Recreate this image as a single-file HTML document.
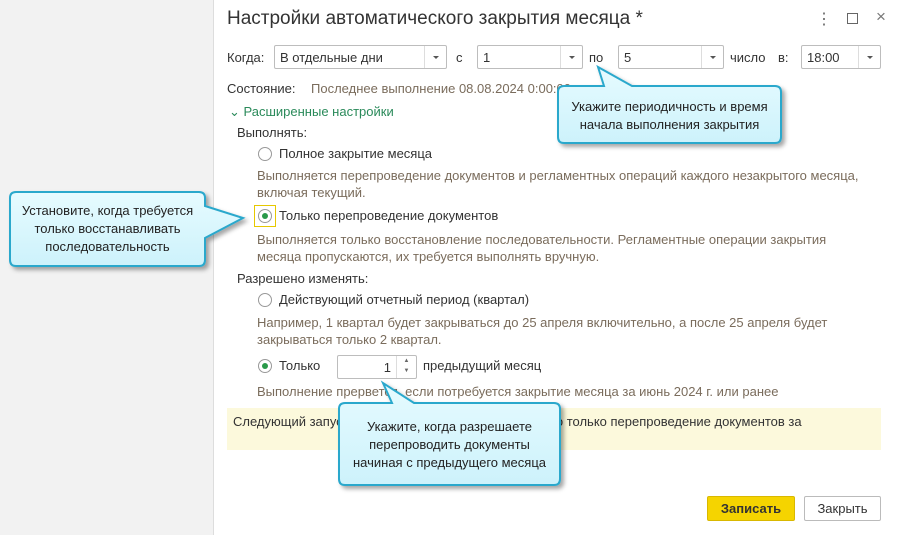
<!DOCTYPE html>
<html><head><meta charset="utf-8"><style>
*{margin:0;padding:0;box-sizing:border-box}
body{width:900px;height:535px;position:relative;overflow:hidden;background:#fff;font-family:"Liberation Sans",sans-serif;font-size:13px;color:#333}
.a{position:absolute;white-space:nowrap}
.left{position:absolute;left:0;top:0;width:214px;height:535px;background:#f2f2f2;border-right:1px solid #ddd}
.inp{position:absolute;height:24px;border:1px solid #bdbdbd;border-radius:2px;background:#fff;padding:4px 5px;font-size:13px}
.dd{position:absolute;right:0;top:0;width:22px;height:22px;border-left:1px solid #ddd}
.dd:after{content:"";position:absolute;left:8px;top:10px;border-left:3px solid transparent;border-right:3px solid transparent;border-top:3px solid #555}
.desc{color:#7a6c5c}
.rad{position:absolute;width:14px;height:14px;border:1px solid #999;border-radius:50%;background:#fff}
.rad.on:after{content:"";position:absolute;left:3px;top:3px;width:6px;height:6px;border-radius:50%;background:#2a9a4a}
.ct{position:absolute;text-align:center;font-size:13px;line-height:18px;color:#222}
</style></head><body>
<div class="left"></div>
<div class="a" style="left:227px;top:8px;font-size:19px;color:#333">Настройки автоматического закрытия месяца *</div>
<div class="a" style="left:816px;top:9px;font-size:16px;color:#666">⋮</div>
<div class="a" style="left:847px;top:13px;width:11px;height:11px;border:1px solid #666"></div>
<div class="a" style="left:876px;top:7px;font-size:17px;color:#777">×</div>

<div class="a" style="left:227px;top:50px">Когда:</div>
<div class="inp" style="left:274px;top:45px;width:173px">В отдельные дни<div class="dd"></div></div>
<div class="a" style="left:456px;top:50px">с</div>
<div class="inp" style="left:477px;top:45px;width:106px">1<div class="dd"></div></div>
<div class="a" style="left:589px;top:50px">по</div>
<div class="inp" style="left:618px;top:45px;width:106px">5<div class="dd"></div></div>
<div class="a" style="left:730px;top:50px">число</div>
<div class="a" style="left:778px;top:50px">в:</div>
<div class="inp" style="left:801px;top:45px;width:80px">18:00<div class="dd"></div></div>

<div class="a" style="left:227px;top:81px">Состояние:</div>
<div class="a desc" style="left:311px;top:81px">Последнее выполнение 08.08.2024 0:00:00, завершено</div>
<div class="a" style="left:229px;top:104px;color:#2a8a5a">⌄ Расширенные настройки</div>
<div class="a" style="left:237px;top:125px">Выполнять:</div>
<div class="rad" style="left:258px;top:147px"></div>
<div class="a" style="left:279px;top:146px">Полное закрытие месяца</div>
<div class="a desc" style="left:257px;top:167px;line-height:17px">Выполняется перепроведение документов и регламентных операций каждого незакрытого месяца,<br>включая текущий.</div>
<div class="a" style="left:254px;top:205px;width:22px;height:22px;border:1px solid #e6c800"></div>
<div class="rad on" style="left:258px;top:209px"></div>
<div class="a" style="left:279px;top:208px">Только перепроведение документов</div>
<div class="a desc" style="left:257px;top:231px;line-height:17px">Выполняется только восстановление последовательности. Регламентные операции закрытия<br>месяца пропускаются, их требуется выполнять вручную.</div>
<div class="a" style="left:237px;top:271px">Разрешено изменять:</div>
<div class="rad" style="left:258px;top:293px"></div>
<div class="a" style="left:279px;top:292px">Действующий отчетный период (квартал)</div>
<div class="a desc" style="left:257px;top:314px;line-height:17px">Например, 1 квартал будет закрываться до 25 апреля включительно, а после 25 апреля будет<br>закрываться только 2 квартал.</div>
<div class="rad on" style="left:258px;top:359px"></div>
<div class="a" style="left:279px;top:358px">Только</div>
<div class="inp" style="left:337px;top:355px;width:80px;text-align:right;padding-right:25px">1<div style="position:absolute;right:0;top:0;width:20px;height:22px;border-left:1px solid #ddd;font-size:6px;color:#666;text-align:center;line-height:10px">▲<br>▼</div></div>
<div class="a" style="left:423px;top:358px">предыдущий месяц</div>
<div class="a desc" style="left:257px;top:384px">Выполнение прервется, если потребуется закрытие месяца за июнь 2024 г. или ранее</div>
<div class="a" style="left:227px;top:408px;width:654px;height:42px;background:#fcf9dc"></div>
<div class="a" style="left:233px;top:414px">Следующий запуск закрытия месяца будет выполнено только перепроведение документов за</div>

<div class="a" style="left:707px;top:496px;width:88px;height:25px;background:#f5d400;border:1px solid #d9b800;border-radius:2px;text-align:center;line-height:23px;font-weight:bold;color:#333">Записать</div>
<div class="a" style="left:804px;top:496px;width:77px;height:25px;background:#fff;border:1px solid #bbb;border-radius:2px;text-align:center;line-height:23px">Закрыть</div>

<svg class="a" style="left:0;top:0" width="900" height="535">
<defs><linearGradient id="g" x1="0" y1="0" x2="0" y2="1"><stop offset="0" stop-color="#e6fbff"/><stop offset="1" stop-color="#cdf2fb"/></linearGradient>
<filter id="s"><feDropShadow dx="3" dy="3" stdDeviation="2" flood-color="#000" flood-opacity="0.35"/></filter></defs>
<g fill="url(#g)" stroke="#2aa8cc" stroke-width="2" filter="url(#s)">
<path d="M564 86 H604 L598 67 L632 86 H775 Q781 86 781 92 V137 Q781 143 775 143 H564 Q558 143 558 137 V92 Q558 86 564 86Z"/>
<path d="M16 192 H199 Q205 192 205 198 V206 L243 218 L205 238 V260 Q205 266 199 266 H16 Q10 266 10 260 V198 Q10 192 16 192Z"/>
<path d="M345 403 H392 L383 383 L414 403 H554 Q560 403 560 409 V479 Q560 485 554 485 H345 Q339 485 339 479 V409 Q339 403 345 403Z"/>
</g></svg>
<div class="ct" style="left:558px;top:98px;width:223px">Укажите периодичность и время<br>начала выполнения закрытия</div>
<div class="ct" style="left:10px;top:202px;width:195px">Установите, когда требуется<br>только восстанавливать<br>последовательность</div>
<div class="ct" style="left:339px;top:418px;width:221px">Укажите, когда разрешаете<br>перепроводить документы<br>начиная с предыдущего месяца</div>
</body></html>
